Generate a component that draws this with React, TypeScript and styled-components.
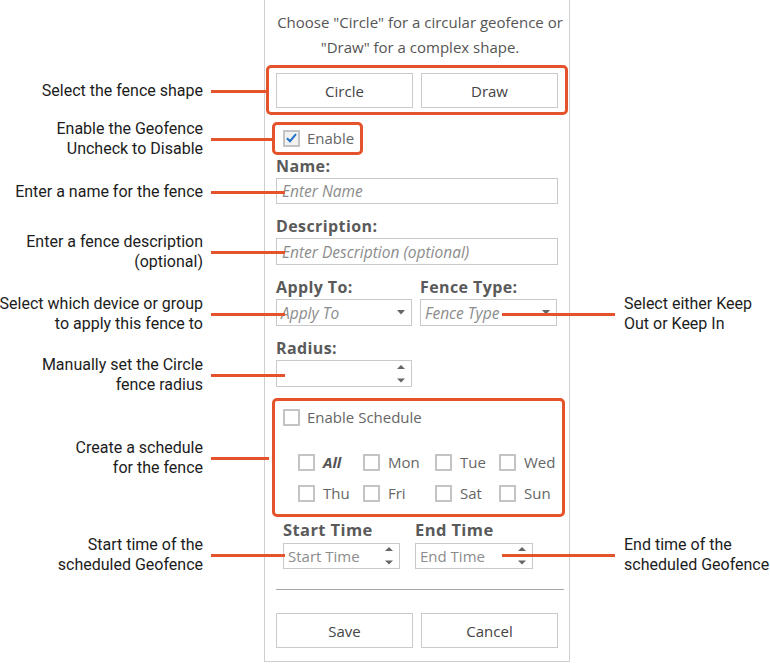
import React from 'react';
import styled, { createGlobalStyle } from 'styled-components';

const ORANGE = '#e4532b';
const UI_FONT = '"Open Sans", "Noto Sans", sans-serif';

const GlobalStyle = createGlobalStyle`
  html, body { margin: 0; padding: 0; background: #ffffff; }
  * { box-sizing: border-box; }
`;

const Canvas = styled.div`
  position: relative;
  width: 770px;
  height: 664px;
  overflow: hidden;
  background: #ffffff;
`;

const Panel = styled.div`
  margin-left: 264px;
  width: 306px;
  height: 662px;
  border: 1px solid #cfcfcf;
  border-top: none;
  padding: 10px 11px 0;
  display: flex;
  flex-direction: column;
  font-family: ${UI_FONT};
  color: #555;
`;

const Intro = styled.p`
  margin: 0 -6px 0 0;
  text-align: center;
  font-size: 15px;
  line-height: 25px;
  color: #555;
  white-space: nowrap;
`;

const ShapeBox = styled.div`
  margin: 5px -10px 0;
  padding: 5px 7px 4px;
  border: 3px solid ${ORANGE};
  border-radius: 5px;
  display: grid;
  grid-template-columns: 1fr 1fr;
  column-gap: 8px;
`;

const ButtonRow = styled.div`
  margin-top: 23px;
  display: grid;
  grid-template-columns: 1fr 1fr;
  column-gap: 8px;
`;

const Button = styled.button`
  height: 35px;
  border: 1px solid #cacaca;
  background: #ffffff;
  font-family: ${UI_FONT};
  font-size: 15px;
  color: #444;
  padding: 0;
`;

const EnableBox = styled.div`
  align-self: flex-start;
  margin: 7px 0 0 -4px;
  padding: 4px 6px 5px 8px;
  border: 3px solid ${ORANGE};
  border-radius: 5px;
  display: flex;
  align-items: center;
  column-gap: 7px;
`;

const Box = styled.span<{ $checked?: boolean }>`
  width: 17px;
  height: 17px;
  flex: none;
  border: 2px solid #c4c4c4;
  background: ${(p) => (p.$checked ? '#f1f1f1' : '#ffffff')};
  display: inline-flex;
  align-items: center;
  justify-content: center;
`;

const CheckText = styled.span<{ $strong?: boolean }>`
  font-size: 15px;
  line-height: 18px;
  color: ${(p) => (p.$strong ? '#555' : '#666')};
  font-weight: ${(p) => (p.$strong ? 700 : 400)};
  font-style: ${(p) => (p.$strong ? 'italic' : 'normal')};
`;

const Check = ({ checked }: { checked?: boolean }) => (
  <Box $checked={checked}>
    {checked && (
      <svg width="11" height="10" viewBox="0 0 11 10">
        <path d="M1 5.2 L4 8.2 L10 1.2" fill="none" stroke="#1f6fc5" strokeWidth="2" />
      </svg>
    )}
  </Box>
);

const Field = styled.div<{ $mt: number }>`
  margin-top: ${(p) => p.$mt}px;
  display: flex;
  flex-direction: column;
  row-gap: 3px;
`;

const FieldLabel = styled.div`
  font-weight: 700;
  font-size: 16px;
  letter-spacing: 0.4px;
  line-height: 18px;
  color: #5a5a5a;
`;

const TextInput = styled.input<{ $h?: number }>`
  height: ${(p) => p.$h ?? 26}px;
  width: 100%;
  border: 1px solid #c9c9c9;
  padding: 0 5px;
  margin: 0;
  font-family: ${UI_FONT};
  font-size: 15.5px;
  font-style: italic;
  color: #444;
  background: #fff;
  outline: none;
  &::placeholder {
    color: #8c8c8c;
  }
`;

const PairRow = styled.div`
  margin-top: 13px;
  display: grid;
  grid-template-columns: 136px 137px;
  column-gap: 8px;
`;

const Control = styled.div<{ $italic?: boolean; $h?: number }>`
  height: ${(p) => p.$h ?? 27}px;
  border: 1px solid #c9c9c9;
  padding: 0 6px 0 4px;
  display: flex;
  align-items: center;
  justify-content: space-between;
  font-size: ${(p) => (p.$italic ? 15.5 : 15)}px;
  font-style: ${(p) => (p.$italic ? 'italic' : 'normal')};
  color: #8c8c8c;
  background: #fff;
`;

const RadiusControl = styled(Control)`
  width: 136px;
`;

const Arrow = () => (
  <svg width="8" height="5" viewBox="0 0 8 5">
    <polygon points="0,0 8,0 4,4.5" fill="#666" />
  </svg>
);

const Spinner = () => (
  <svg width="8" height="20" viewBox="0 0 8 20">
    <polygon points="0,5 8,5 4,1" fill="#666" />
    <polygon points="0,14.5 8,14.5 4,18.5" fill="#666" />
  </svg>
);

const ScheduleBox = styled.div`
  margin: 11px -7px 0 -4px;
  padding: 7px 8px 12px;
  border: 3px solid ${ORANGE};
  border-radius: 5px;
`;

const CheckRow = styled.label`
  display: flex;
  align-items: center;
  column-gap: 7px;
`;

const DayGrid = styled.div`
  margin: 27px 0 0 15px;
  display: grid;
  grid-template-columns: 65px 72px 64px auto;
  row-gap: 13px;
`;

const DayCell = styled.label`
  display: flex;
  align-items: center;
  column-gap: 8px;
`;

const TimeRow = styled.div`
  margin-top: 4px;
  padding-left: 7px;
  display: grid;
  grid-template-columns: 117px 118px;
  column-gap: 15px;
`;

const TimeField = styled.div`
  display: flex;
  flex-direction: column;
  row-gap: 4px;
`;

const TimeLabel = styled.div`
  font-weight: 700;
  font-size: 16.5px;
  letter-spacing: 0.4px;
  line-height: 18px;
  color: #5a5a5a;
  white-space: nowrap;
`;

const Rule = styled.hr`
  margin: 20px -6px 0 0;
  border: none;
  border-top: 1px solid #a8a8a8;
  height: 0;
`;

const CalloutLeft = styled.div<{ $y: number; $x: number }>`
  position: absolute;
  left: 0;
  top: ${(p) => p.$y}px;
  width: ${(p) => p.$x}px;
  transform: translateY(-50%);
  display: flex;
  align-items: center;
  justify-content: flex-end;
`;

const CalloutRight = styled.div<{ $y: number }>`
  position: absolute;
  left: 502px;
  top: ${(p) => p.$y}px;
  transform: translateY(-50%);
  display: flex;
  align-items: center;
`;

const CalloutText = styled.div<{ $right?: boolean }>`
  font-family: Roboto, "Noto Sans", sans-serif;
  font-size: 16px;
  line-height: 20px;
  color: #1c1c1c;
  text-align: ${(p) => (p.$right ? 'left' : 'right')};
  white-space: nowrap;
  margin: ${(p) => (p.$right ? '0 0 0 9px' : '0 8px 0 0')};
`;

const Leader = styled.div<{ $w: number }>`
  width: ${(p) => p.$w}px;
  height: 3px;
  flex: none;
  background: ${ORANGE};
`;

const leftCallouts = [
  { y: 91, x: 266, lines: ['Select the fence shape'] },
  { y: 139, x: 272, lines: ['Enable the Geofence', 'Uncheck to Disable'] },
  { y: 192, x: 285, lines: ['Enter a name for the fence'] },
  { y: 252, x: 285, lines: ['Enter a fence description', '(optional)'] },
  { y: 314, x: 285, lines: ['Select which device or group', 'to apply this fence to'] },
  { y: 375, x: 285, lines: ['Manually set the Circle', 'fence radius'] },
  { y: 458, x: 269, lines: ['Create a schedule', 'for the fence'] },
  { y: 555, x: 285, lines: ['Start time of the', 'scheduled Geofence'] },
];

const rightCallouts = [
  { y: 314, lines: ['Select either Keep', 'Out or Keep In'] },
  { y: 555, lines: ['End time of the', 'scheduled Geofence'] },
];

const days = ['All', 'Mon', 'Tue', 'Wed', 'Thu', 'Fri', 'Sat', 'Sun'];

export default function App() {
  return (
    <>
      <GlobalStyle />
      <Canvas>
        <Panel>
          <Intro>
            Choose "Circle" for a circular geofence or
            <br />
            "Draw" for a complex shape.
          </Intro>
          <ShapeBox>
            <Button>Circle</Button>
            <Button>Draw</Button>
          </ShapeBox>
          <EnableBox>
            <Check checked />
            <CheckText>Enable</CheckText>
          </EnableBox>
          <Field $mt={2}>
            <FieldLabel>Name:</FieldLabel>
            <TextInput readOnly placeholder="Enter Name" />
          </Field>
          <Field $mt={13}>
            <FieldLabel>Description:</FieldLabel>
            <TextInput readOnly $h={27} placeholder="Enter Description (optional)" />
          </Field>
          <PairRow>
            <Field $mt={0}>
              <FieldLabel>Apply To:</FieldLabel>
              <Control $italic>
                <span>Apply To</span>
                <Arrow />
              </Control>
            </Field>
            <Field $mt={0}>
              <FieldLabel>Fence Type:</FieldLabel>
              <Control $italic>
                <span>Fence Type</span>
                <Arrow />
              </Control>
            </Field>
          </PairRow>
          <Field $mt={13}>
            <FieldLabel>Radius:</FieldLabel>
            <RadiusControl>
              <span />
              <Spinner />
            </RadiusControl>
          </Field>
          <ScheduleBox>
            <CheckRow>
              <Check />
              <CheckText>Enable Schedule</CheckText>
            </CheckRow>
            <DayGrid>
              {days.map((d) => (
                <DayCell key={d}>
                  <Check />
                  <CheckText $strong={d === 'All'}>{d}</CheckText>
                </DayCell>
              ))}
            </DayGrid>
          </ScheduleBox>
          <TimeRow>
            <TimeField>
              <TimeLabel>Start Time</TimeLabel>
              <Control $h={26}>
                <span>Start Time</span>
                <Spinner />
              </Control>
            </TimeField>
            <TimeField>
              <TimeLabel>End Time</TimeLabel>
              <Control $h={26}>
                <span>End Time</span>
                <Spinner />
              </Control>
            </TimeField>
          </TimeRow>
          <Rule />
          <ButtonRow>
            <Button>Save</Button>
            <Button>Cancel</Button>
          </ButtonRow>
        </Panel>
        {leftCallouts.map((c) => (
          <CalloutLeft key={c.lines[0]} $y={c.y} $x={c.x}>
            <CalloutText>
              {c.lines.map((l) => (
                <div key={l}>{l}</div>
              ))}
            </CalloutText>
            <Leader $w={c.x - 211} />
          </CalloutLeft>
        ))}
        {rightCallouts.map((c) => (
          <CalloutRight key={c.lines[0]} $y={c.y}>
            <Leader $w={113} />
            <CalloutText $right>
              {c.lines.map((l) => (
                <div key={l}>{l}</div>
              ))}
            </CalloutText>
          </CalloutRight>
        ))}
      </Canvas>
    </>
  );
}
